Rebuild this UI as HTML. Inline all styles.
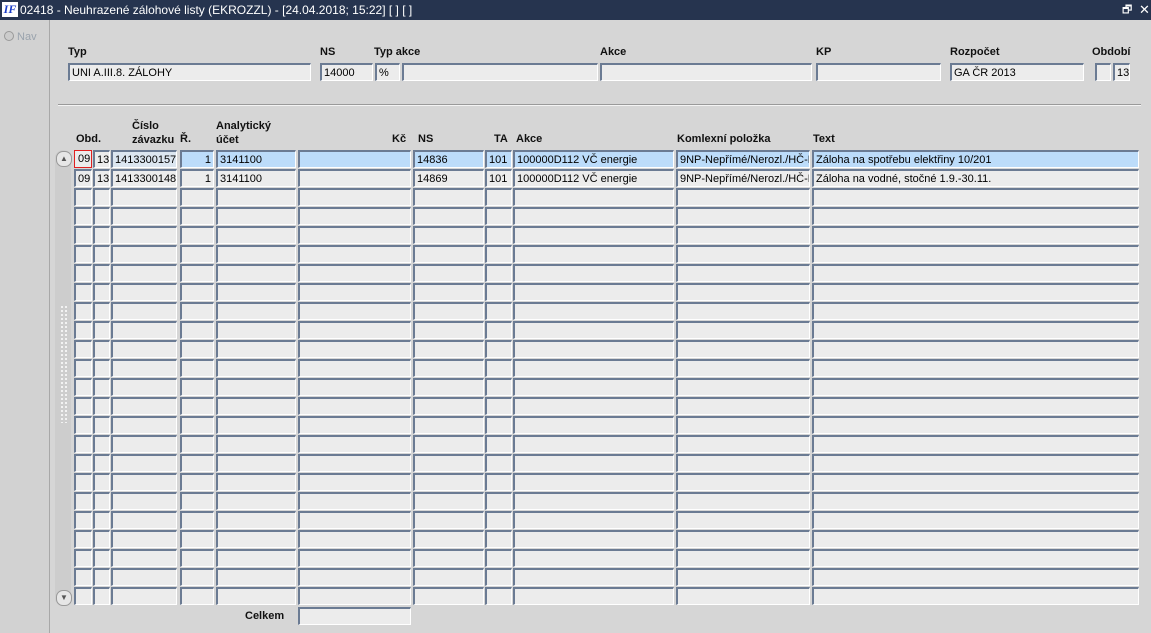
<!DOCTYPE html><html><head><meta charset="utf-8"><style>
body{margin:0;width:1151px;height:633px;overflow:hidden;background:#d6d6d6;font-family:"Liberation Sans",Arial,sans-serif;font-size:11px;position:relative}
.a{position:absolute}
.t{position:absolute;top:0;left:0;width:1151px;height:20px;background:#26344f;color:#fff;font-size:12px;line-height:20px}
.f{position:absolute;box-sizing:border-box;height:18px;background:#ececec;border-top:2px solid #6b7b93;border-left:2px solid #6b7b93;border-right:1px solid #fff;border-bottom:1px solid #fff;line-height:16px;padding-left:2px;white-space:nowrap;overflow:hidden;color:#000}
.s{background:#bcdcfa}
.l{position:absolute;font-weight:bold;font-size:11px;color:#111}
.r{text-align:right;padding-right:2px}
</style></head><body>
<div class="t"><span class="a" style="left:2px;top:2px;width:16px;height:15px;background:#fff;color:#1a3cc8;font:italic bold 12px 'Liberation Serif';line-height:15px;text-align:center">IF</span><span class="a" style="left:20px">02418 - Neuhrazené zálohové listy (EKROZZL) - [24.04.2018; 15:22]  [ ]  [ ]</span><span class="a" style="left:1122px;font-size:11px">🗗</span><span class="a" style="left:1139px;font-size:13px">✕</span></div>
<div class="a" style="left:0;top:20px;width:49px;height:613px;background:#d2d2d2;border-right:1px solid #a8a8a8"></div>
<div class="a" style="left:4px;top:31px;width:40px;height:14px;color:#9aa3ad;font-size:11px"><span style="display:inline-block;width:8px;height:8px;border-radius:50%;border:1px solid #999;background:#ccc;vertical-align:-1px"></span> Nav</div>
<div class="l" style="left:68px;top:46px">Typ</div><div class="l" style="left:320px;top:46px">NS</div><div class="l" style="left:374px;top:46px">Typ akce</div><div class="l" style="left:600px;top:46px">Akce</div><div class="l" style="left:816px;top:46px">KP</div><div class="l" style="left:950px;top:46px">Rozpočet</div><div class="l" style="left:1092px;top:46px">Období</div>
<div class="f" style="left:68px;top:63px;width:243px">UNI A.III.8. ZÁLOHY</div>
<div class="f" style="left:320px;top:63px;width:53px">14000</div>
<div class="f" style="left:375px;top:63px;width:25px">%</div>
<div class="f" style="left:402px;top:63px;width:196px"></div>
<div class="f" style="left:600px;top:63px;width:212px"></div>
<div class="f" style="left:816px;top:63px;width:125px"></div>
<div class="f" style="left:950px;top:63px;width:134px">GA ČR  2013</div>
<div class="f" style="left:1095px;top:63px;width:16px"></div>
<div class="f" style="left:1113px;top:63px;width:17px">13</div>
<div class="a" style="left:58px;top:104px;width:1083px;height:1px;background:#9a9a9a;border-bottom:1px solid #f4f4f4"></div>
<div class="l" style="left:76px;top:133px">Obd.</div>
<div class="l" style="left:132px;top:119px;line-height:14px">Číslo<br>závazku</div>
<div class="l" style="left:180px;top:133px">Ř.</div>
<div class="l" style="left:216px;top:119px;line-height:14px">Analytický<br>účet</div>
<div class="l" style="left:392px;top:133px">Kč</div>
<div class="l" style="left:418px;top:133px">NS</div>
<div class="l" style="left:494px;top:133px">TA</div>
<div class="l" style="left:516px;top:133px">Akce</div>
<div class="l" style="left:677px;top:133px">Komlexní položka</div>
<div class="l" style="left:813px;top:133px">Text</div>
<div class="a" style="left:55px;top:150px;width:16px;height:456px;background:#cdcdcd;border-radius:8px"></div>
<div class="a" style="left:56px;top:151px;width:14px;height:14px;border-radius:7px;background:#e6e6e6;border:1px solid #999;color:#555;font-size:8px;text-align:center;line-height:13px">▲</div>
<div class="a" style="left:56px;top:590px;width:14px;height:14px;border-radius:7px;background:#e6e6e6;border:1px solid #999;color:#555;font-size:8px;text-align:center;line-height:14px">▼</div>
<div class="a" style="left:60px;top:305px;width:8px;height:118px;background-image:radial-gradient(#fff 1px,transparent 1px);background-size:4px 4px"></div>
<div id="g"></div>
<div class="l" style="left:245px;top:610px">Celkem</div>
<div class="f" style="left:298px;top:607px;width:113px"></div>
<script>
var c=[[74,18],[93,17],[111,66],[180,34],[216,80],[298,113],[413,71],[485,27],[513,161],[676,134],[812,327]];
var d=[["09","13","1413300157","1","3141100","","14836","101","100000D112 VČ energie","9NP-Nepřímé/Nerozl./HČ-Př","Záloha na spotřebu elektřiny 10/201"],["09","13","1413300148","1","3141100","","14869","101","100000D112 VČ energie","9NP-Nepřímé/Nerozl./HČ-Př","Záloha na vodné, stočné 1.9.-30.11."]];
var h="";for(var r=0;r<24;r++){for(var i=0;i<11;i++){var v=d[r]?d[r][i]:"";var cl="f"+(r==0&&i>2?" s":"")+(i==3?" r":"");var st="left:"+c[i][0]+"px;top:"+(150+r*19)+"px;width:"+c[i][1]+"px";if(r==0&&i==2)st+=";background:#dce6f0";if(r==0&&i==0)st+=";border:1px solid #e02020;padding-left:3px";h+='<div class="'+cl+'" style="'+st+'">'+v+'</div>';}}
document.getElementById("g").innerHTML=h;
</script>
</body></html>
